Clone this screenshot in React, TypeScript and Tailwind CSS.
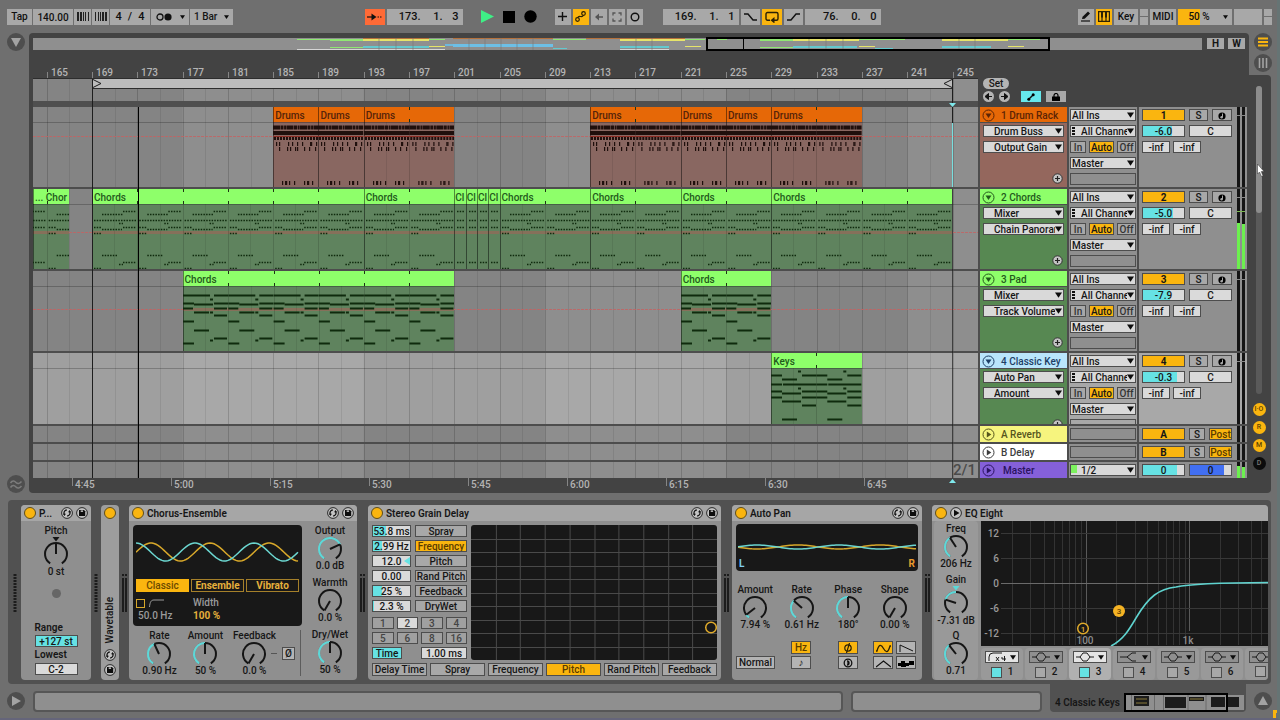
import React from "react";

const BAR = 860.5 / 76;
const barX = (bar: number) => 59 + (bar - 169) * BAR;

/* ---------- data ---------- */

type Seg = [y: number, from: number, to: number];

interface ClipData {
  name: string;
  from: number;
  to: number;
}

interface Track {
  name: string;
  color: string;
  text: string;
  body: string;
  clipHead: string;
  clipText: string;
  clipBody: string;
  kind: "drums" | "chords" | "pad" | "keys";
  device: string;
  param: string;
  volume: string;
  volumeFill: number;
  meter: number;
  automation: number | null;
  selected?: boolean;
  clips: ClipData[];
}

const green = {
  color: "#8eff6a",
  text: "#235a1c",
  body: "#578852",
  clipHead: "#8eff6a",
  clipText: "#235a1c",
  clipBody: "#5f835e",
};

const tracks: Track[] = [
  {
    name: "1 Drum Rack",
    color: "#e66807",
    text: "#5c2405",
    body: "#94675d",
    clipHead: "#e66807",
    clipText: "#55230a",
    clipBody: "#896761",
    kind: "drums",
    device: "Drum Buss",
    param: "Output Gain",
    volume: "-6.0",
    volumeFill: 70,
    meter: 0,
    automation: 29,
    clips: [
      { name: "Drums", from: 185, to: 189 },
      { name: "Drums", from: 189, to: 193 },
      { name: "Drums", from: 193, to: 201 },
      { name: "Drums", from: 213, to: 221 },
      { name: "Drums", from: 221, to: 225 },
      { name: "Drums", from: 225, to: 229 },
      { name: "Drums", from: 229, to: 237 },
    ],
  },
  {
    ...green,
    name: "2 Chords",
    kind: "chords",
    device: "Mixer",
    param: "Chain Panorama",
    volume: "-5.0",
    volumeFill: 73,
    meter: 46,
    automation: 43,
    clips: [
      { name: "... Chor", from: 163.79, to: 167 },
      { name: "Chords", from: 169, to: 193 },
      { name: "Chords", from: 193, to: 201 },
      { name: "Cl", from: 201, to: 202 },
      { name: "Cl", from: 202, to: 203 },
      { name: "Cl", from: 203, to: 204 },
      { name: "Cl", from: 204, to: 205 },
      { name: "Chords", from: 205, to: 213 },
      { name: "Chords", from: 213, to: 221 },
      { name: "Chords", from: 221, to: 229 },
      { name: "Chords", from: 229, to: 245 },
    ],
  },
  {
    ...green,
    name: "3 Pad",
    kind: "pad",
    device: "Mixer",
    param: "Track Volume",
    volume: "-7.9",
    volumeFill: 66,
    meter: 0,
    automation: 38,
    clips: [
      { name: "Chords", from: 177, to: 201 },
      { name: "Chords", from: 221, to: 229 },
    ],
  },
  {
    ...green,
    name: "4 Classic Key",
    color: "#b9e5fb",
    text: "#1d3f66",
    kind: "keys",
    device: "Auto Pan",
    param: "Amount",
    volume: "-0.3",
    volumeFill: 84,
    meter: 0,
    automation: null,
    selected: true,
    clips: [{ name: "Keys", from: 229, to: 237 }],
  },
];

const chordNotes: Seg[] = [
  [7, 31, 44], [10, 10, 31], [16, 2, 44], [19, 27, 31], [23, 2, 10], [23, 31, 44],
  [25, 10, 30], [29, 2, 10], [51, 10, 26], [58, 31, 44], [60, 27, 31], [64, 2, 10],
];
const padNotes: Seg[] = [
  [9, 0, 27], [9, 31, 45], [13, 27, 30], [17, 0, 11], [17, 31, 45], [18, 11, 30],
  [22, 0, 10], [22, 31, 44], [26, 11, 26], [26, 27, 30], [29, 31, 44], [35, 0, 11],
  [44, 11, 26], [52, 31, 44], [54, 27, 30], [57, 0, 11],
];
const keyNotes: Seg[] = [
  [3, 27, 30], [7, 0, 11], [7, 31, 45], [11, 11, 26], [16, 0, 11], [16, 12, 45],
  [20, 27, 30], [23, 0, 11], [23, 31, 45], [25, 11, 30], [29, 0, 11], [29, 31, 45],
  [33, 11, 30], [37, 31, 45], [51, 11, 26],
];
const noteSets = { chords: chordNotes, pad: padNotes, keys: keyNotes };

const drumA = [3, 6, 15, 19, 24, 29, 37, 38, 43];
const drumB = [6, 14, 17, 22, 24, 31, 36, 42];
const drumC = [9, 12, 13, 16, 21, 31, 34, 35, 39];

/* ---------- small parts ---------- */

const chip =
  "flex items-center justify-center overflow-hidden whitespace-nowrap border border-[#4d4d4d] pt-px leading-[10px]";

const Arrow: React.FC<{ className?: string }> = ({ className }) => (
  <svg className={className} width="8" height="6" viewBox="0 0 8 6">
    <path d="M0 0H8L4 6Z" fill="#0c0c0c" />
  </svg>
);

const Chooser: React.FC<{
  label: string;
  value: string;
  className?: string;
  dots?: boolean;
  indent?: boolean;
}> = ({ label, value, className = "", dots, indent }) => (
  <div className={`relative h-3 ${className}`}>
    <select
      aria-label={label}
      className={`block h-3 w-full appearance-none overflow-hidden border border-[#4d4d4d] bg-[#d9d9d9] pr-2 pt-px leading-[10px] ${
        dots || indent ? "pl-2.5" : "pl-px"
      }`}
    >
      <option>{value}</option>
    </select>
    {dots && (
      <svg className="pointer-events-none absolute left-0.5 top-0.5" width="4" height="8">
        <path d="M0 0h3v2H0zM0 3h3v2H0zM0 6h3v2H0z" fill="#111" />
      </svg>
    )}
    <Arrow className="pointer-events-none absolute right-0.5 top-[3px] h-[6px] w-[7px]" />
  </div>
);

const Field: React.FC<{
  label: string;
  value: string;
  fill?: number;
  fillColor?: string;
  className?: string;
}> = ({ label, value, fill = 0, fillColor = "#66e2e4", className = "" }) => (
  <input
    aria-label={label}
    defaultValue={value}
    className={`block h-3 min-w-0 border border-[#4d4d4d] pt-px text-center leading-[10px] ${className}`}
    style={{
      background: `linear-gradient(90deg, ${fillColor} ${fill}%, #dadada ${fill}%)`,
    }}
  />
);

const polar = (cx: number, cy: number, r: number, deg: number) => {
  const a = (deg * Math.PI) / 180;
  return `${(cx + r * Math.sin(a)).toFixed(2)} ${(cy - r * Math.cos(a)).toFixed(2)}`;
};

const arc = (cx: number, cy: number, r: number, from: number, to: number) =>
  `M${polar(cx, cy, r, from)}A${r} ${r} 0 ${to - from > 180 ? 1 : 0} 1 ${polar(cx, cy, r, to)}`;

const Knob: React.FC<{
  label: string;
  value: string;
  angle: number;
  bipolar?: boolean;
}> = ({ label, value, angle, bipolar }) => {
  const h = bipolar ? 30 : 24;
  const cy = bipolar ? 18 : 13;
  const start = bipolar ? Math.min(0, angle) : -148;
  const end = bipolar ? Math.max(0, angle) : angle;
  return (
    <label className="relative flex flex-col items-center whitespace-nowrap leading-[11px]">
      <span>{label}</span>
      <input
        type="range"
        min={-150}
        max={150}
        defaultValue={angle}
        className="sr-only"
      />
      <svg width="26" height={h} viewBox={`0 0 26 ${h}`} fill="none">
        <path d={arc(13, cy, 11, -148, 148)} stroke="#151515" strokeWidth="2" />
        {end > start && (
          <>
            <path d={arc(13, cy, 11, start, end)} stroke="#8f8f8f" strokeWidth="3" />
            <path d={arc(13, cy, 11, start, end)} stroke="#5cd8d8" strokeWidth="2" />
          </>
        )}
        <path
          d={`M13 ${cy}L${polar(13, cy, 11, angle)}`}
          stroke="#151515"
          strokeWidth="2"
        />
        {bipolar && (
          <path d="M9.500 1h7l-3.500 4.500z" fill={angle === 0 ? "#151515" : "#5cd8d8"} />
        )}
      </svg>
      <span>{value}</span>
    </label>
  );
};

const wave = (
  width: number,
  mid: number,
  amp: number,
  period: number,
  peak: number,
) => {
  let d = "";
  for (let x = 0; x <= width; x += 2) {
    const y = mid - amp * Math.cos(((x - peak) / period) * 2 * Math.PI);
    d += `${x === 0 ? "M" : "L"}${x} ${y.toFixed(2)}`;
  }
  return d;
};

const HotSwap = () => (
  <button aria-label="Hot-swap preset" className="shrink-0">
    <svg width="12" height="12" viewBox="0 0 12 12" fill="none">
      <circle cx="6" cy="6" r="5.400" fill="#c3c3c3" stroke="#2a2a2a" />
      <path d="M3.300 7.400A3 3 0 0 1 5.800 3M8.700 4.600A3 3 0 0 1 6.200 9" stroke="#111" strokeWidth="1.300" />
      <path d="M1.900 6.800h3L3.500 8.900zM10.100 5.200h-3l1.400-2.100z" fill="#111" />
    </svg>
  </button>
);

const SaveIcon = () => (
  <button aria-label="Save preset" className="shrink-0">
    <svg width="12" height="12" viewBox="0 0 12 12">
      <circle cx="6" cy="6" r="5.400" fill="#c3c3c3" stroke="#2a2a2a" />
      <path d="M3 3h5l1.200 1.200V9H3z" fill="#0d0d0d" />
      <path d="M4.700 3.400h2.400v1.500H4.700z" fill="#c3c3c3" />
    </svg>
  </button>
);

const PowerDot = () => (
  <button
    aria-label="Device activator"
    className="size-3 shrink-0 rounded-full border border-[#5d4c1b] bg-[#fab50f]"
  />
);

const Device: React.FC<{
  title: string;
  className?: string;
  plain?: boolean;
  children: React.ReactNode;
}> = ({ title, className = "", plain, children }) => (
  <section className={`flex flex-col overflow-hidden rounded bg-[#8f8f8f] ${className}`}>
    <header className="flex h-4 shrink-0 items-center gap-[3px] bg-[#a6a6a6] px-[3px]">
      <PowerDot />
      {plain && (
        <button aria-label="Show spectrum" className="shrink-0">
          <svg width="12" height="12" viewBox="0 0 12 12">
            <circle cx="6" cy="6" r="5.400" fill="#c3c3c3" stroke="#2a2a2a" />
            <path d="M4 2.800v6.400L9.500 6z" fill="#0d0d0d" />
          </svg>
        </button>
      )}
      <h2 className="flex-1 whitespace-nowrap font-semibold">{title}</h2>
      {!plain && (
        <>
          <HotSwap />
          <SaveIcon />
        </>
      )}
    </header>
    {children}
  </section>
);

const RackDots: React.FC<{ className: string }> = ({ className }) => (
  <div className={`flex shrink-0 items-center justify-center ${className}`}>
    <svg width="4" height="38">
      <path d="M2 0V38" stroke="#1c1c1c" strokeWidth="3" strokeDasharray="2 1" />
    </svg>
  </div>
);

const LevelPair: React.FC<{ className: string }> = ({ className }) => (
  <div className={`flex shrink-0 items-center justify-center ${className}`}>
    <svg width="5" height="38">
      <path d="M0 0h2v2H0zM3 0h2v2H3zM0 4h2v34H0zM3 4h2v34H3z" fill="#1c1c1c" />
    </svg>
  </div>
);

/* ---------- control bar ---------- */

const barItem =
  "flex h-4 shrink-0 items-center justify-center whitespace-nowrap bg-[#a8a8a8] text-[#101010]";

const Position: React.FC<{ label: string; parts: [string, string, string] }> = ({
  label,
  parts,
}) => (
  <div className={`${barItem} w-[76px] pt-px`} role="group" aria-label={label}>
    <input aria-label={`${label} bars`} defaultValue={parts[0]} className="w-[34px] text-right" />
    <input aria-label={`${label} beats`} defaultValue={parts[1]} className="w-[22px] text-right" />
    <input aria-label={`${label} sixteenths`} defaultValue={parts[2]} className="mr-1 w-4 text-right" />
  </div>
);

const MiniPair = () => (
  <div className="flex h-4 w-2 shrink-0 flex-col gap-px">
    <div className="flex-1 bg-[#a8a8a8]" />
    <div className="flex-1 bg-[#a8a8a8]" />
  </div>
);

const ControlBar = () => (
  <header className="flex h-[33px] items-center pl-[7px] pr-[5px] text-[11px]">
    <div className="flex items-center gap-px">
      <button className={`${barItem} w-[25px] text-[10px]`}>Tap</button>
      <input aria-label="Tempo" defaultValue="140.00" className={`${barItem} w-10 pt-px text-center text-[10px]`} />
      <button aria-label="Nudge down" className={`${barItem} w-[17px]`}>
        <svg width="12" height="9">
          <path d="M0 0h2v9H0zM3 0h2v9H3zM6 0h1v9H6zM8 0h1v9H8zM11 0h1v9h-1z" fill="#222" />
        </svg>
      </button>
      <button aria-label="Nudge up" className={`${barItem} w-[17px]`}>
        <svg width="12" height="9">
          <path d="M0 0h1v9H0zM3 0h1v9H3zM5 0h1v9H5zM7 0h2v9H7zM10 0h2v9h-2z" fill="#222" />
        </svg>
      </button>
      <button className={`${barItem} w-10 gap-[6px] pt-px`}>
        <span>4</span>
        <span>/</span>
        <span>4</span>
      </button>
      <button aria-label="Metronome" className={`${barItem} w-[38px] gap-2`}>
        <svg width="16" height="8" viewBox="0 0 16 8">
          <circle cx="4" cy="4" r="3" fill="none" stroke="#111" strokeWidth="1.300" />
          <circle cx="12" cy="4" r="3.600" fill="#111" />
        </svg>
        <Arrow className="h-1 w-[5px]" />
      </button>
      <div className="relative h-4 w-[43px]">
        <select
          aria-label="Quantization"
          className="block h-4 w-full appearance-none bg-[#a8a8a8] pl-1 text-[10px]"
        >
          <option>1 Bar</option>
        </select>
        <Arrow className="pointer-events-none absolute right-1 top-1.5 h-1 w-[5px]" />
      </div>
    </div>

    <div className="grow-2" />

    <div className="flex items-center">
      <button aria-label="Follow" className={`${barItem} mr-0.5 w-5 bg-[#ff6a36]!`}>
        <svg width="15" height="8" viewBox="0 0 15 8">
          <path d="M0 4h6" stroke="#111" strokeWidth="1.200" />
          <path d="M4.500 0.500v7L9.500 4z" fill="#111" />
          <path d="M10.500 4h1.500M13 4h1.500" stroke="#111" strokeWidth="1.200" />
        </svg>
      </button>
      <Position label="Position" parts={["173.", "1.", "3"]} />
      <div className="ml-[18px] mr-[18px] flex items-center gap-[9px]">
        <button aria-label="Play">
          <svg width="13" height="13">
            <path d="M0 0v13L13 6.500z" fill="#3fef86" />
          </svg>
        </button>
        <button aria-label="Stop">
          <svg width="12" height="12">
            <path d="M0 0h12v12H0z" />
          </svg>
        </button>
        <button aria-label="Record">
          <svg width="13" height="13">
            <circle cx="6.500" cy="6.500" r="6.200" />
          </svg>
        </button>
      </div>
      <div className="flex gap-0.5">
        <button aria-label="Overdub" className={`${barItem} w-4`}>
          <svg width="9" height="9">
            <path d="M4.500 0v9M0 4.500h9" stroke="#111" strokeWidth="1.400" />
          </svg>
        </button>
        <button aria-label="Automation arm" className={`${barItem} w-4 bg-[#fab50f]!`}>
          <svg width="11" height="11" viewBox="0 0 11 11" fill="none" stroke="#2b2105" strokeWidth="1.200">
            <circle cx="2.500" cy="8.500" r="1.800" />
            <circle cx="8.500" cy="2.500" r="1.800" />
            <path d="M2.800 6.700C3.500 3.500 7.500 7.500 8.200 4.300" />
          </svg>
        </button>
        <button aria-label="Re-enable automation" className={`${barItem} w-4`}>
          <svg width="8" height="8">
            <path d="M0 4l4-3.500v7z" fill="#555" />
            <path d="M3 4h5" stroke="#555" strokeWidth="1.500" />
          </svg>
        </button>
        <button aria-label="Capture MIDI" className={`${barItem} w-4`}>
          <svg width="10" height="10" fill="none" stroke="#555" strokeWidth="1.300">
            <path d="M1 3.500V1h2.500M6.500 1H9v2.500M9 6.500V9H6.500M3.500 9H1V6.500" />
          </svg>
        </button>
        <button aria-label="Session record" className={`${barItem} w-4`}>
          <svg width="10" height="10">
            <circle cx="5" cy="5" r="3.800" fill="none" stroke="#111" strokeWidth="1.400" />
          </svg>
        </button>
      </div>
      <div className="ml-5 flex gap-0.5">
        <Position label="Loop start" parts={["169.", "1.", "1"]} />
        <button aria-label="Punch in" className={`${barItem} w-[19px]`}>
          <svg width="13" height="8">
            <path d="M0 1h4l5 6h4" fill="none" stroke="#111" strokeWidth="1.400" />
          </svg>
        </button>
        <button aria-label="Loop" className={`${barItem} w-5 bg-[#fab50f]!`}>
          <svg width="14" height="12" viewBox="0 0 14 12">
            <path d="M5 9.300H2.500a1.500 1.500 0 0 1-1.500-1.500V3a1.500 1.500 0 0 1 1.500-1.500h9A1.500 1.500 0 0 1 13 3v4.800a1.500 1.500 0 0 1-1.500 1.500H9" fill="none" stroke="#2b2105" strokeWidth="1.400" />
            <path d="M5.500 9.300L9.500 6v6.500z" fill="#2b2105" />
          </svg>
        </button>
        <button aria-label="Punch out" className={`${barItem} w-[19px]`}>
          <svg width="13" height="8">
            <path d="M0 7h4l5-6h4" fill="none" stroke="#111" strokeWidth="1.400" />
          </svg>
        </button>
        <Position label="Loop length" parts={["76.", "0.", "0"]} />
      </div>
    </div>

    <div className="grow-3" />

    <div className="flex gap-0.5">
      <button aria-label="Draw mode" className={`${barItem} w-4`}>
        <svg width="12" height="11" viewBox="0 0 12 11">
          <path d="M2 8l.6-2.300L8 .5l2 2-5.300 5.200z" fill="#111" />
          <path d="M1 10h9" stroke="#111" strokeWidth="1.200" />
        </svg>
      </button>
      <button aria-label="Computer MIDI keyboard" className={`${barItem} w-4 bg-[#fab50f]!`}>
        <svg width="12" height="11" viewBox="0 0 12 11">
          <path d="M.6.600h10.800v9.800H.6zM4 6v4.500M8 6v4.500" fill="none" stroke="#2b2105" strokeWidth="1.200" />
          <path d="M3 0h2v6.500H3zM7 0h2v6.500H7z" fill="#2b2105" />
        </svg>
      </button>
      <button className={`${barItem} w-6 text-[10px]`}>Key</button>
      <MiniPair />
      <button className={`${barItem} w-[26px] text-[10px]`}>MIDI</button>
      <button
        aria-label="CPU load"
        className={`${barItem} relative w-[54px] bg-[linear-gradient(90deg,#fab50f_22px,#a8a8a8_22px)]! pr-3 text-[10px]`}
      >
        50 %
        <Arrow className="absolute right-1 top-1.5 h-1 w-[5px]" />
      </button>
      <div className={`${barItem} w-7`} />
      <MiniPair />
    </div>
  </header>
);

/* ---------- arrangement ---------- */

const Y = "#e6e46a";
const G = "#8fe873";
const C = "#62c9cf";
const O = "#b5713c";
const W = "#d6d6d6";
const overviewSegs: [string, number, number, number, number][] = [
  [G, 264, 298, 1, 1], [G, 297, 330, 1, 2], [O, 330, 396, 0, 1], [Y, 330, 396, 1, 2],
  [G, 396, 412, 1, 1], [W, 264, 412, 11, 1], [G, 297, 330, 9, 1], [C, 330, 396, 8, 2],
  [Y, 396, 412, 8, 1], ["#6db9dd", 412, 420, 6, 2], ["#6dbfe6", 420, 520, 6, 3],
  [O, 420, 520, 0, 1], [G, 520, 553, 1, 1], [C, 520, 534, 10, 1], [O, 553, 587, 0, 1],
  [Y, 587, 652, 1, 2], [O, 587, 652, 0, 1], [C, 587, 636, 8, 2], [W, 587, 636, 11, 1],
  [G, 652, 672, 1, 1], [Y, 652, 668, 8, 1], [G, 684, 694, 1, 1], [G, 727, 760, 1, 2],
  [G, 727, 760, 9, 1], [O, 760, 826, 0, 1], [Y, 760, 826, 1, 2], [C, 760, 824, 8, 2],
  [W, 695, 842, 11, 1], [G, 826, 872, 1, 1], [Y, 826, 842, 8, 1], [C, 842, 860, 10, 1],
  [O, 875, 909, 0, 1], [Y, 909, 975, 1, 2], [C, 909, 958, 8, 2], [W, 909, 995, 11, 1],
  [G, 975, 1007, 1, 1], [Y, 975, 991, 8, 1],
];

const Overview = () => (
  <div className="mr-0.5 flex h-3 gap-[5px]">
    <div className="relative h-3 flex-1 bg-[#8f8f8f]">
      <svg className="absolute inset-x-0 -top-1 h-5 w-full overflow-visible">
        {overviewSegs.map(([fill, from, to, y, h], i) => (
          <rect key={i} x={from} y={y + 4} width={to - from} height={h} fill={fill} />
        ))}
        {[346, 363, 380, 436, 452, 468, 484, 500, 603, 619, 776, 793, 810, 926, 942].map((x) => (
          <path key={x} d={`M${x} 4v12`} stroke="#777" strokeWidth=".6" />
        ))}
        <path d="M710.500 4v12" stroke="#000" />
        <path d="M674 4h342v12H674z" fill="none" stroke="#000" strokeWidth="2" />
      </svg>
    </div>
    <button className="h-[11px] w-[17px] bg-[#a8a8a8] font-bold leading-[11px]">H</button>
    <button className="-ml-px h-[11px] w-[17px] bg-[#a8a8a8] font-bold leading-[11px]">W</button>
  </div>
);

const Stripes: React.FC<{ light?: boolean }> = ({ light }) => (
  <svg className="absolute inset-0 h-full w-full">
    <rect width="100%" height="100%" fill={light ? "#9f9f9f" : "#848484"} />
    {[177, 209, 241].map((bar) => (
      <rect
        key={bar}
        x={barX(bar)}
        width={16 * BAR}
        height="100%"
        fill={light ? "#a8a8a8" : "#8e8e8e"}
      />
    ))}
    {Array.from({ length: 41 }, (_, i) => (
      <rect
        key={i}
        x={Math.round(barX(165 + i * 2))}
        width="1"
        height="100%"
        fill="#000"
        opacity={i % 2 ? 0.08 : 0.16}
      />
    ))}
  </svg>
);

const Ruler = () => (
  <div className="flex h-[57px] gap-0.5">
    <div className="flex min-w-0 flex-1 flex-col">
      <div className="relative h-7 text-[#b4b4b4]">
        {Array.from({ length: 21 }, (_, i) => 165 + i * 4).map((bar) => (
          <span
            key={bar}
            className="absolute top-[18px] pl-1 leading-[10px] before:absolute before:left-0 before:top-1 before:h-1.5 before:w-px before:bg-[#858585]"
            style={{ left: Math.round(barX(bar)) }}
          >
            {bar}
          </span>
        ))}
      </div>
      <div className="relative h-[23px] overflow-hidden">
        <Stripes />
        <svg className="absolute inset-0 h-full w-full">
          <path d="M0 .5h946" stroke="#2d2d2d" />
          <path d="M59.500 .5h860v10h-860z" fill="#bcbcbc" stroke="#2d2d2d" />
          <path d="M60 1.500l8 4-8 4M919 1.500l-8 4 8 4" fill="none" stroke="#1b1b1b" />
        </svg>
      </div>
      <div className="h-1.5 bg-[#4f4f4f]" />
    </div>
    <div className="flex w-[267px] flex-col gap-0.5 pl-[3px] pt-7">
      <button className="h-[11px] w-[26px] rounded-full bg-[#b4b4b4] leading-[11px]">Set</button>
      <div className="flex items-center">
        <button aria-label="Previous locator">
          <svg width="11" height="11">
            <circle cx="5.500" cy="5.500" r="5.500" fill="#b4b4b4" />
            <path d="M2 5.500L5.500 2.500v6zM4.500 5.500H9" stroke="#111" fill="#111" />
          </svg>
        </button>
        <button aria-label="Next locator" className="ml-[5px]">
          <svg width="11" height="11">
            <circle cx="5.500" cy="5.500" r="5.500" fill="#b4b4b4" />
            <path d="M9 5.500L5.500 2.500v6zM6.500 5.500H2" stroke="#111" fill="#111" />
          </svg>
        </button>
        <button
          aria-label="Automation mode"
          className="ml-[11px] flex h-[11px] w-5 items-center justify-center bg-[#66e8ec]"
        >
          <svg width="8" height="8">
            <path d="M1.500 6.500L6.500 1.500" stroke="#111" strokeWidth="1.400" />
            <circle cx="1.800" cy="6.200" r="1.500" />
            <circle cx="6.200" cy="1.800" r="1.500" />
          </svg>
        </button>
        <button
          aria-label="Lock envelopes"
          className="ml-[5px] flex h-[11px] w-5 items-center justify-center bg-[#a8a8a8]"
        >
          <svg width="8" height="8">
            <path d="M0 3.500h8V8H0z" />
            <path d="M2 4V2.500a2 2 0 0 1 4 0V4" fill="none" stroke="#000" strokeWidth="1.200" />
          </svg>
        </button>
      </div>
    </div>
  </div>
);

const Notes: React.FC<{ kind: Track["kind"]; from: number; to: number }> = ({ kind, from, to }) => {
  const four = BAR * 4;
  // phrases repeat every four bars, counted from bar 169
  const first = Math.floor((from - 169) / 4);
  const last = Math.ceil((to - 169) / 4);
  if (kind === "chords" && to - from === 1) {
    return (
      <svg className="absolute inset-x-0 bottom-0 top-[15px] h-[65px] w-full">
        <path
          d="M3 7.500h7M3 16.500h7M3 23.500h7M3 58.500h7"
          stroke="#0f2a0d"
          strokeWidth="1.400"
          strokeDasharray="1.500 1.200"
        />
      </svg>
    );
  }
  return (
    <svg className="absolute inset-x-0 bottom-0 top-[15px] h-[65px] w-full">
      {Array.from({ length: last - first }, (_, i) => {
        const x0 = (169 + (first + i) * 4 - from) * BAR;
        if (kind === "drums") {
          return (
            <g key={i} fill="#1f0f0c" transform={`translate(${x0.toFixed(1)} 0)`}>
              <path d={`M0 5.500H${four}`} stroke="#1f0f0c" strokeWidth="4" strokeDasharray="7 .5 3 .6 2 .4" />
              <rect y="9" width={four} height="4" />
              <path d={`M0 14.500H${four}`} stroke="#8c2a22" />
              <path d={`M1 16.500H${four}`} stroke="#1f0f0c" strokeWidth="3" strokeDasharray="2 1" />
              {drumA.map((x) => <rect key={x} x={x} y="20" width="1.200" height="4" />)}
              {drumB.map((x) => <rect key={x} x={x} y="25" width="1.200" height="4" />)}
              {drumC.map((x) => <rect key={x} x={x} y="59" width="1.200" height="4" />)}
            </g>
          );
        }
        const dotted = kind === "chords";
        return (
          <g key={i} transform={`translate(${x0.toFixed(1)} 0)`}>
            {noteSets[kind].map(([y, a, b], n) => (
              <path
                key={n}
                d={`M${a} ${y + 0.5}H${b}`}
                stroke="#0f2a0d"
                strokeWidth={dotted ? 1.4 : 2}
                strokeDasharray={dotted ? "1.5 1.2" : undefined}
              />
            ))}
          </g>
        );
      })}
    </svg>
  );
};

const Clip: React.FC<{ clip: ClipData; track: Track }> = ({ clip, track }) => {
  const ticks = [];
  for (let b = 165; b < clip.to; b += 4) if (b > clip.from) ticks.push(b);
  return (
    <div
      className="absolute inset-y-0 overflow-hidden"
      style={{
        left: barX(clip.from),
        width: (clip.to - clip.from) * BAR,
        background: track.clipBody,
      }}
    >
      <div
        className={`h-[15px] whitespace-nowrap leading-[17px] ${
          clip.to - clip.from === 1 ? "pl-px" : "pl-0.5"
        }`}
        style={{ background: track.clipHead, color: track.clipText }}
      >
        {clip.name}
      </div>
      <svg className="absolute inset-0 h-full w-full">
        {track.automation !== null && track.kind !== "drums" && (
          <rect y={track.automation - 1} width="100%" height="3" fill="#86705a" />
        )}
        {ticks.map((b) => {
          const x = Math.round((b - clip.from) * BAR);
          return (
            <React.Fragment key={b}>
              <path d={`M${x + 0.5} 0v3M${x + 0.5} 12v3`} stroke="#1d3315" />
              <path d={`M${x + 0.5} 15v70`} stroke="#000" opacity=".14" />
              <path d={`M${x - 22.500} 15v70`} stroke="#000" opacity=".08" />
            </React.Fragment>
          );
        })}
        <path d="M.5 0v85" stroke="#000" opacity=".45" />
        <path d="M0 15.500h2000" stroke="#000" opacity=".25" />
      </svg>
      <Notes kind={track.kind} from={clip.from} to={clip.to} />
    </div>
  );
};

const FoldButton: React.FC<{ label: string; color: string; open?: boolean }> = ({
  label,
  color,
  open,
}) => (
  <button aria-label={label} className="shrink-0" style={{ color }}>
    <svg width="13" height="13" viewBox="0 0 13 13" fill="none">
      <circle cx="6.500" cy="6.500" r="5.500" stroke="currentColor" />
      <path d={open ? "M3.500 4.500h6l-3 4.500z" : "M4.800 3.500v6l4.500-3z"} fill="currentColor" />
    </svg>
  </button>
);

const Meter: React.FC<{ level: number; tick?: boolean }> = ({ level, tick }) => (
  <div className="relative flex h-full w-2 shrink-0 gap-0.5">
    {[0, 1].map((n) => (
      <div key={n} className="flex flex-1 flex-col justify-end bg-[#141414]">
        <div className="bg-[#6cf04f]" style={{ height: level - n }} />
      </div>
    ))}
    {tick && <div className="absolute inset-x-0 top-2 h-px bg-[#8a8a8a]" />}
    {level > 20 && <div className="absolute inset-x-0 top-[22px] h-px bg-[#7ab84f]" />}
  </div>
);

const TrackRow: React.FC<{ track: Track; index: number }> = ({ track, index }) => {
  const panel = track.selected ? "bg-[#a8a8a8]" : "bg-[#8f8f8f]";
  return (
    <div className={`flex gap-0.5 ${track.selected ? "h-[71px]" : "h-20"}`}>
      <div className="relative min-w-0 flex-1 overflow-hidden">
        <Stripes light={track.selected} />
        <svg className="absolute inset-0 h-full w-full">
          <path d="M0 15.500h2000" stroke="#000" opacity=".22" />
          {track.automation !== null && (
            <path
              d={`M0 ${track.automation + 0.5}h2000`}
              stroke="#c26464"
              strokeDasharray="3 1"
              opacity=".85"
            />
          )}
        </svg>
        {track.clips.map((clip) => (
          <Clip key={clip.from} clip={clip} track={track} />
        ))}
      </div>

      <div className="flex w-[87px] flex-col overflow-hidden" style={{ background: track.body }}>
        <div
          className="flex h-4 shrink-0 items-center gap-1.5 whitespace-nowrap border-b border-[#4d4d4d] pl-0.5 pt-px"
          style={{ background: track.color, color: track.text }}
        >
          <FoldButton label={`Fold ${track.name}`} color={track.text} open />
          <span>{track.name}</span>
        </div>
        <div className="flex flex-col gap-1 px-[3px] pt-0.5">
          <Chooser label="Device" value={track.device} indent />
          <Chooser label="Parameter" value={track.param} indent />
        </div>
        <button aria-label="Add automation lane" className="ml-auto mr-1 mt-5 shrink-0">
          <svg width="11" height="11">
            <circle cx="5.500" cy="5.500" r="4.700" fill="#c4c4c4" stroke="#333" />
            <path d="M5.500 3v5M3 5.500h5" stroke="#222" strokeWidth="1.200" />
          </svg>
        </button>
      </div>

      <div className={`flex w-[68px] flex-col gap-1 overflow-hidden px-px pt-0.5 ${panel}`}>
        <Chooser label="Input type" value="All Ins" className="shrink-0" />
        <Chooser label="Input channel" value="All Channels" dots className="shrink-0" />
        <div className="flex shrink-0 justify-between">
          <button className={`${chip} h-3 w-4 bg-[#a8a8a8] text-[#333]`}>In</button>
          <button className={`${chip} h-3 w-[25px] bg-[#fab50f]`}>Auto</button>
          <button className={`${chip} h-3 w-[19px] bg-[#a8a8a8] text-[#333]`}>Off</button>
        </div>
        <Chooser label="Output type" value="Master" className="shrink-0" />
        <div className="h-3 shrink-0 border border-[#4d4d4d]" />
      </div>

      <div className={`flex w-[108px] justify-between pl-[3px] pr-0.5 ${panel}`}>
        <div className="flex w-[90px] flex-col gap-1 pt-0.5">
          <div className="flex gap-1">
            <button className={`${chip} h-3 w-[43px] bg-[#fab50f] font-bold`}>{index + 1}</button>
            <button className={`${chip} h-3 w-[19px] bg-[#a8a8a8]`}>S</button>
            <button aria-label="Arm" className={`${chip} h-3 w-5 bg-[#a8a8a8]`}>
              <svg width="8" height="8">
                <circle cx="4" cy="4" r="3.600" />
                <path d="M4.500 1.500v3.500" fill="none" stroke="#a8a8a8" strokeWidth="1" />
                <circle cx="3.600" cy="5.200" r="1.200" fill="#a8a8a8" />
              </svg>
            </button>
          </div>
          <div className="flex gap-1">
            <Field label="Volume" value={track.volume} fill={track.volumeFill} className="w-[43px]" />
            <Field label="Pan" value="C" className="w-[43px]" />
          </div>
          <div className="flex gap-[3px]">
            <Field label="Send A" value="-inf" className="w-7" />
            <Field label="Send B" value="-inf" className="w-7" />
          </div>
        </div>
        <Meter level={track.meter} tick />
      </div>
    </div>
  );
};

const ReturnRow: React.FC<{ name: string; letter?: string; color: string; text: string }> = ({
  name,
  letter,
  color,
  text,
}) => (
  <div className="flex h-4 gap-0.5">
    <div className="relative min-w-0 flex-1 overflow-hidden">
      <Stripes />
    </div>
    <div
      className="flex w-[87px] items-center gap-1.5 whitespace-nowrap pl-0.5"
      style={{ background: color, color: text }}
    >
      <FoldButton label={`Unfold ${name}`} color={text} />
      <span className={letter ? "" : "pl-0.5"}>{name}</span>
    </div>
    <div className="w-[68px] bg-[#8f8f8f] px-px pt-0.5">
      {letter ? (
        <div className="h-3 border border-[#4d4d4d]" />
      ) : (
        <div className="relative">
          <Chooser label="Master output" value="1/2" indent />
          <div className="absolute left-px top-px h-2 w-[6px] bg-[#7df25f]" />
        </div>
      )}
    </div>
    <div className="flex w-[108px] justify-between bg-[#8f8f8f] pl-[3px] pr-0.5">
      <div className="flex w-[90px] gap-1 pt-0.5">
        {letter ? (
          <>
            <button className={`${chip} h-3 w-[43px] bg-[#fab50f] font-bold`}>{letter}</button>
            <button className={`${chip} h-3 w-4 bg-[#a8a8a8]`}>S</button>
            <button className={`${chip} h-3 w-[23px] bg-[#fab50f] text-[#5a3c00]`}>Post</button>
          </>
        ) : (
          <>
            <Field label="Master volume" value="0" fill={84} className="w-[43px]" />
            <Field label="Cue volume" value="0" fill={84} fillColor="#416ff2" className="w-[43px]" />
          </>
        )}
      </div>
      <Meter level={letter ? 0 : 12} />
    </div>
  </div>
);

const times = ["4:45", "5:00", "5:15", "5:30", "5:45", "6:00", "6:15", "6:30", "6:45"];

const TimeRuler = () => (
  <div className="relative h-[15px] text-[#b4b4b4]">
    {times.map((t, i) => (
      <span
        key={t}
        className="absolute top-0 pl-[3px] leading-[14px] before:absolute before:left-0 before:top-0 before:h-2 before:w-px before:bg-[#858585]"
        style={{ left: 39 + i * 99 }}
      >
        {t}
      </span>
    ))}
  </div>
);

const RoundButton: React.FC<{ label: string; children: React.ReactNode }> = ({
  label,
  children,
}) => (
  <button aria-label={label} className="size-[18px] shrink-0">
    <svg width="18" height="18" viewBox="0 0 18 18">
      <circle cx="9" cy="9" r="9" fill="#4e4e4e" />
      {children}
    </svg>
  </button>
);

const Arrangement = () => (
  <main className="flex">
    <div className="flex w-[29px] shrink-0 flex-col justify-between pb-0 pl-[7px]">
      <RoundButton label="Show browser">
        <path d="M4 5h10L9 14z" fill="#a3a3a3" />
      </RoundButton>
      <RoundButton label="Groove pool">
        <path
          d="M3.500 8c2-3 4-2 5.500-.5s3.500 1.500 5.500-1M3.500 12.500c2-3 4-2 5.500-.5s3.500 1.500 5.500-1"
          fill="none"
          stroke="#7c7c7c"
          strokeWidth="1.600"
        />
      </RoundButton>
    </div>

    <div className="min-w-0 flex-1 rounded-l rounded-tr bg-[#434343] pl-1 pr-0.5 pt-[5px]">
      <Overview />
      <div className="relative">
        <Ruler />
        <div className="flex flex-col gap-0.5 bg-[#4d4d4d]">
          {tracks.map((track, i) => (
            <TrackRow key={track.name} track={track} index={i} />
          ))}
          <ReturnRow name="A Reverb" letter="A" color="#f6f47e" text="#56551c" />
          <ReturnRow name="B Delay" letter="B" color="#ffffff" text="#3d3d3d" />
          <ReturnRow name="Master" color="#8560d9" text="#2a1260" />
        </div>
        <TimeRuler />
        {/* loop edges, playhead and insert marker run across every lane */}
        <svg className="pointer-events-none absolute left-0 top-0 h-full w-[945px]">
          <path d="M59.500 29v399" stroke="#1e1e1e" />
          <path d="M105.500 57v371" stroke="#000" />
          <path d="M919.500 29v44" stroke="#1e1e1e" />
          <path d="M919.500 73v64" stroke="#79dede" />
          <path d="M919.500 139v289" stroke="#1e1e1e" opacity=".7" />
          <path d="M916 53h7l-3.500 4zM916 433h7l-3.500-4z" fill="#7fe9ec" />
        </svg>
        <span className="absolute bottom-[15px] right-[271px] text-[15px] leading-4 text-[#4a4a4a]">
          2/1
        </span>
      </div>
    </div>

    <aside className="flex w-[28px] shrink-0 flex-col">
      <div className="flex h-[42px] flex-col items-end gap-[3px] pr-[5px]">
        <RoundButton label="Arrangement view">
          <path d="M4 5.500h10M4 9h10M4 12.500h10" stroke="#fab50f" strokeWidth="2" />
        </RoundButton>
        <RoundButton label="Session view">
          <path d="M5.500 4v10M9 4v10M12.500 4v10" stroke="#a3a3a3" strokeWidth="1.600" />
        </RoundButton>
      </div>
      <div className="relative mr-1.5 flex flex-1 flex-col items-center rounded-br rounded-tr bg-[#434343] pr-0.5 pt-[11px]">
        <div className="h-[308px] w-1.5 rounded-full bg-[#5a5a5a]">
          <div className="h-[127px] rounded-full bg-[#8c8c8c]" />
        </div>
        <div className="mt-[9px] flex flex-col gap-[5px]">
          {["I·O", "R", "M", "D"].map((t) => (
            <button
              key={t}
              className={`size-[13px] rounded-full text-[7px] leading-[13px] ${
                t === "D" ? "bg-[#0c0c0c] text-[#777]" : "bg-[#fab50f] text-[#5e4300]"
              }`}
            >
              {t}
            </button>
          ))}
        </div>
        <svg className="pointer-events-none absolute left-2 top-[89px]" width="8" height="13">
          <path d="M.5 0v10l2-2 2 4.500 1.500-.700-1.800-4.300H7z" fill="#fff" stroke="#333" strokeWidth=".5" />
        </svg>
      </div>
    </aside>
  </main>
);

/* ---------- devices ---------- */

const PitchDevice = () => (
  <Device title="P..." className="w-[70px] shrink-0">
    <div className="flex flex-1 flex-col items-center pt-1">
      <Knob label="Pitch" value="0 st" angle={0} bipolar />
      <div className="mt-3 size-[9px] rounded-full bg-[#666]" />
      <div className="mb-[5px] mt-auto flex w-[43px] flex-col">
        <label className="font-semibold leading-[15px]" htmlFor="range">
          Range
        </label>
        <input
          id="range"
          defaultValue="+127 st"
          className="h-3 w-full border border-[#4d4d4d] bg-[#66e2e4] pt-px text-center leading-[10px]"
        />
        <label className="font-semibold leading-4" htmlFor="lowest">
          Lowest
        </label>
        <input
          id="lowest"
          defaultValue="C-2"
          className="h-3 w-full border border-[#4d4d4d] bg-[#dadada] pt-px text-center leading-[10px]"
        />
      </div>
    </div>
  </Device>
);

const WavetableDevice = () => (
  <section className="flex w-[18px] shrink-0 flex-col items-center rounded bg-[#9d9d9d] pb-1 pt-0.5">
    <PowerDot />
    <h2 className="mb-1.5 mt-auto rotate-180 whitespace-nowrap leading-3 [writing-mode:vertical-rl]">
      Wavetable
    </h2>
    <div className="flex flex-col gap-[3px]">
      <HotSwap />
      <SaveIcon />
    </div>
  </section>
);

const ChorusDevice = () => (
  <Device title="Chorus-Ensemble" className="w-[228px] shrink-0">
    <div className="flex flex-1 pl-1">
      <div className="flex w-[169px] flex-col pt-1">
        <div className="flex h-[101px] flex-col rounded bg-[#181818] px-[3px]">
          <svg className="mt-3" width="163" height="30" fill="none" strokeWidth="1.500">
            <path d={wave(162, 15, 9, 59, 15)} stroke="#d8a82a" />
            <path d={wave(162, 15, 9, 59, 0)} stroke="#6bd6d0" />
          </svg>
          <div className="mt-3 grid grid-cols-3 gap-0.5">
            {["Classic", "Ensemble", "Vibrato"].map((m, i) => (
              <button
                key={m}
                className={`h-[13px] border leading-[12px] ${
                  i === 0
                    ? "border-[#fab50f] bg-[#fab50f] text-[#6b4a00]"
                    : "border-[#a5802a] font-bold text-[#e6b03c]"
                }`}
              >
                {m}
              </button>
            ))}
          </div>
          <div className="mt-[5px] flex leading-3 text-[#9b9b9b]">
            <div className="flex w-11 flex-col gap-px">
              <div className="flex h-3 items-center gap-1">
                <input
                  type="checkbox"
                  aria-label="High-pass filter"
                  className="size-[9px] appearance-none border border-[#d8a82a]"
                />
                <svg width="15" height="8">
                  <path d="M.5 8C1 3 2 1 5 1h10" fill="none" stroke="#9b9b9b" />
                </svg>
              </div>
              <span className="whitespace-nowrap pl-0.5">50.0 Hz</span>
            </div>
            <div className="ml-[13px] flex flex-col gap-px">
              <span>Width</span>
              <span className="font-bold text-[#e6b03c]">100 %</span>
            </div>
          </div>
        </div>
        <div className="flex pt-1">
          <div className="flex w-[53px] flex-col items-center">
            <Knob label="Rate" value="0.90 Hz" angle={-25} />
          </div>
          <div className="flex w-[39px] flex-col items-center">
            <Knob label="Amount" value="50 %" angle={0} />
          </div>
          <div className="flex w-[59px] flex-col items-center">
            <Knob label="Feedback" value="0.0 %" angle={-150} />
          </div>
        </div>
      </div>
      <div className="-ml-[31px] mb-1 flex h-[46px] items-center gap-[5px] self-end">
        <div className="h-px w-[6px] bg-[#555]" />
        <button className={`${chip} size-[13px] bg-[#b4b4b4]`}>Ø</button>
        <div className="h-full w-px bg-[#5c5c5c]" />
      </div>
      <div className="flex flex-1 flex-col gap-[6px] pl-0.5 pt-1">
        <Knob label="Output" value="0.0 dB" angle={65} />
        <Knob label="Warmth" value="0.0 %" angle={-150} />
        <Knob label="Dry/Wet" value="50 %" angle={0} />
      </div>
    </div>
  </Device>
);

const grainRows: [string, number, string][] = [
  ["53.8 ms", 35, "Spray"],
  ["2.99 Hz", 24, "Frequency"],
  ["12.0", 0, "Pitch"],
  ["0.00", 0, "Rand Pitch"],
  ["25 %", 25, "Feedback"],
  ["2.3 %", 3, "DryWet"],
];

const GrainDevice = () => (
  <Device title="Stereo Grain Delay" className="w-[353px] shrink-0">
    <div className="flex gap-1 px-1 pt-1">
      <div className="flex w-[95px] shrink-0 flex-col gap-[3px]">
        {grainRows.map(([value, fill, label]) => (
          <div key={label} className="relative flex justify-between">
            <Field label={`${label} amount`} value={value} fill={fill} className="w-[39px]" />
            {label === "Pitch" && (
              <svg className="pointer-events-none absolute left-8 top-0.5" width="6" height="8">
                <path d="M6 0v8L0 4z" fill="#66e2e4" />
              </svg>
            )}
            <button
              className={`${chip} h-3 w-[52px] ${
                label === "Frequency" ? "bg-[#fab50f] text-[#5a3c00]" : "bg-[#a8a8a8]"
              }`}
            >
              {label}
            </button>
          </div>
        ))}
        <div className="mt-0.5 grid grid-cols-4 gap-[3px] text-[#444]">
          {["1", "2", "3", "4", "5", "6", "8", "16"].map((n) => (
            <button key={n} className={`${chip} h-3 ${n === "2" ? "bg-[#dadada]" : "bg-[#a0a0a0]"}`}>
              {n}
            </button>
          ))}
        </div>
        <div className="flex justify-between">
          <button className={`${chip} h-3 w-[30px] bg-[#66e2e4]`}>Time</button>
          <Field label="Delay time" value="1.00 ms" className="w-[46px]" />
        </div>
      </div>
      <svg className="h-[135px] min-w-0 flex-1" viewBox="0 0 247 135" preserveAspectRatio="none">
        <rect width="247" height="135" rx="3" fill="#181818" />
        {Array.from({ length: 9 }, (_, i) => (
          <path
            key={i}
            d={`M${Math.round((i + 1) * 24.7)}.5 0v135M0 ${Math.round((i + 1) * 13.5)}.5h247`}
            stroke="#4a4a4a"
          />
        ))}
        <circle cx="241" cy="102.500" r="5.300" fill="none" stroke="#e0ab2b" strokeWidth="1.500" />
      </svg>
    </div>
    <div className="grid grid-cols-6 gap-[3px] px-1 pt-[3px]">
      {["Delay Time", "Spray", "Frequency", "Pitch", "Rand Pitch", "Feedback"].map((t) => (
        <button
          key={t}
          className={`${chip} h-[13px] ${t === "Pitch" ? "bg-[#fab50f] text-[#5a3c00]" : "bg-[#a8a8a8]"}`}
        >
          {t}
        </button>
      ))}
    </div>
  </Device>
);

const AutoPanDevice = () => (
  <Device title="Auto Pan" className="w-[190px] shrink-0">
    <div className="mx-1 mt-[3px] flex h-[47px] flex-col rounded bg-[#181818]">
      <svg className="mx-0.5 mt-[18px]" width="178" height="10" fill="none" strokeWidth="1.500">
        <path d={wave(178, 5, 2, 82, 60)} stroke="#d8a82a" />
        <path d={wave(178, 5, 2, 82, 19)} stroke="#6bd6d0" />
      </svg>
      <div className="flex justify-between px-[3px] pt-1.5 font-bold leading-3">
        <span className="text-[#7ecdf2]">L</span>
        <span className="text-[#e89b2c]">R</span>
      </div>
    </div>
    <div className="grid grid-cols-4 pr-1 pt-[13px]">
      <Knob label="Amount" value="7.94 %" angle={-128} />
      <Knob label="Rate" value="0.61 Hz" angle={-48} />
      <Knob label="Phase" value="180°" angle={0} />
      <Knob label="Shape" value="0.00 %" angle={-150} />
    </div>
    <div className="mt-auto flex items-end pb-[11px] pl-1">
      <button className={`${chip} h-[13px] w-[39px] bg-[#b4b4b4]`}>Normal</button>
      <div className="ml-4 flex flex-col gap-0.5">
        <button className={`${chip} h-[13px] w-5 bg-[#fab50f] text-[#5a3c00]`}>Hz</button>
        <button className={`${chip} h-[13px] w-5 bg-[#b4b4b4]`}>♪</button>
      </div>
      <div className="ml-[27px] flex flex-col gap-0.5">
        <button aria-label="Phase mode" className={`${chip} h-[13px] w-5 bg-[#fab50f]`}>
          <svg width="10" height="10" fill="none" stroke="#2b2105" strokeWidth="1.200">
            <circle cx="5" cy="5" r="3.200" />
            <path d="M6.500 0l-3 10" />
          </svg>
        </button>
        <button aria-label="Spin mode" className={`${chip} h-[13px] w-5 bg-[#b4b4b4]`}>
          <svg width="10" height="10" fill="none" stroke="#111" strokeWidth="1.300">
            <circle cx="5" cy="5" r="3.800" />
            <path d="M4 3a2 2 0 1 1 0 4M5 3.500v3" />
          </svg>
        </button>
      </div>
      <div className="ml-[15px] grid grid-cols-2 gap-x-[3px] gap-y-0.5">
        <button aria-label="Sine" className={`${chip} h-[13px] w-5 bg-[#fab50f]`}>
          <svg width="15" height="9">
            <path d="M0 7h1C3 0 5 0 7.500 4.500S12 9 14 2h1" fill="none" stroke="#2b2105" strokeWidth="1.300" />
          </svg>
        </button>
        <button aria-label="Saw" className={`${chip} h-[13px] w-5 bg-[#b4b4b4]`}>
          <svg width="15" height="9">
            <path d="M1 8V1l13 6" fill="none" stroke="#111" />
          </svg>
        </button>
        <button aria-label="Triangle" className={`${chip} h-[13px] w-5 bg-[#b4b4b4]`}>
          <svg width="15" height="9">
            <path d="M0 8l7.500-6L15 8" fill="none" stroke="#111" strokeWidth="1.200" />
          </svg>
        </button>
        <button aria-label="Random" className={`${chip} h-[13px] w-5 bg-[#b4b4b4]`}>
          <svg width="16" height="9">
            <path d="M0 4h3V2h4v2h4V2h5v4h-5v1H8v1H3V7H0z" />
          </svg>
        </button>
      </div>
    </div>
  </Device>
);

const eqMinor = [31, 49, 63, 73, 81, 88, 94, 100, 135, 154, 166, 177, 185, 192, 198, 204, 239, 257, 270, 280];

const bell = "M0 6h4M14 6h4M4 6l3-4h4l3 4-3 4H7z";
const bandShapes = [
  "M1 10V6Q1 2 5 2h9M8 6l3 4m0-4l-3 4M14 6v2h4M16.500 5v5",
  bell,
  bell,
  "M0 6h7M16 2h-4L7 6l5 4h4",
  bell,
  bell,
  bell,
];

const EqDevice = () => (
  <Device title="EQ Eight" plain className="min-w-0 flex-1">
    <div className="flex flex-1 gap-[3px] pl-0.5">
      <div className="flex w-11 shrink-0 flex-col rounded bg-[#999] pt-0.5">
        <Knob label="Freq" value="206 Hz" angle={-33} />
        <div className="pb-1 pt-[5px]">
          <Knob label="Gain" value="-7.31 dB" angle={-72} bipolar />
        </div>
        <Knob label="Q" value="0.71" angle={-38} />
      </div>
      <div className="flex min-w-0 flex-1 flex-col">
        <div className="relative h-[125px] bg-[#181818]">
          <svg className="absolute inset-0 h-full w-full">
            {eqMinor.map((x) => (
              <path key={x} d={`M${x}.5 0v124`} stroke="#333" />
            ))}
            <path d="M105.500 0v110M208.500 0v110" stroke="#5a5a5a" />
            <path d="M20 12.500h280M20 37.500h280M20 87.500h280M20 112.500h280" stroke="#383838" />
            <path d="M20 62.500h280" stroke="#6a6a6a" />
            <path
              d="M130 125C142 119 148 109 155 97C168 75 178 68 195 66C210 62.500 240 61.500 300 61.500"
              fill="none"
              stroke="#5fd3cf"
              strokeWidth="1.600"
            />
            <circle cx="138" cy="90" r="6" fill="#f5b324" />
            <circle cx="102" cy="107.500" r="5.300" fill="#181818" stroke="#e0ab2b" strokeWidth="1.500" />
            <text x="138" y="93" textAnchor="middle" fontSize="8" fill="#5a3c00">3</text>
            <text x="102" y="110.500" textAnchor="middle" fontSize="8" fill="#e0ab2b">1</text>
            <text x="104" y="123" textAnchor="middle" fontSize="10" fill="#8d8d8d">100</text>
            <text x="207" y="123" textAnchor="middle" fontSize="10" fill="#8d8d8d">1k</text>
          </svg>
          <div className="absolute left-0 top-0 flex w-[18px] flex-col text-right leading-[25px] text-[#9a9a9a]">
            {["12", "6", "0", "-6", "-12"].map((t) => (
              <span key={t}>{t}</span>
            ))}
          </div>
        </div>
        <div className="flex flex-1 overflow-hidden pt-0.5">
          {bandShapes.map((d, i) => {
            const lit = i === 0 || i === 2;
            return (
              <div
                key={i}
                className={`mr-0.5 flex w-[42px] shrink-0 flex-col items-center gap-[3px] rounded pt-[3px] ${
                  i === 2 ? "bg-[#b0b0b0]" : "bg-[#999]"
                }`}
              >
                <button
                  aria-label={`Band ${i + 1} filter type`}
                  className={`flex h-3 w-[34px] items-center justify-between border border-[#4d4d4d] px-0.5 ${
                    lit ? "bg-[#e4e4e4]" : "bg-[#8f8f8f]"
                  }`}
                >
                  <svg width="20" height="12" viewBox="0 0 20 12" fill="none" stroke="#1a1a1a">
                    <path d={d} />
                  </svg>
                  <Arrow className="h-[5px] w-[6px]" />
                </button>
                <label className="flex items-center gap-[6px] leading-3">
                  <input
                    type="checkbox"
                    defaultChecked={lit}
                    className="size-[11px] appearance-none border border-[#4d4d4d] bg-[#a8a8a8] checked:bg-[#66e2e4]"
                    aria-label={`Band ${i + 1} on`}
                  />
                  {i < 6 ? <span>{i + 1}</span> : <span className="w-1.5" />}
                </label>
              </div>
            );
          })}
        </div>
      </div>
    </div>
  </Device>
);

const DeviceChain = () => (
  <div className="mt-[7px] ml-2 mr-[6px] flex h-[184px] rounded bg-[#515151] pb-1 pr-[3px] pt-[5px]">
    <RackDots className="w-[13px]" />
    <PitchDevice />
    <RackDots className="w-[10px]" />
    <WavetableDevice />
    <LevelPair className="w-[10px]" />
    <ChorusDevice />
    <LevelPair className="w-[11px]" />
    <GrainDevice />
    <LevelPair className="w-[11px]" />
    <AutoPanDevice />
    <LevelPair className="w-[10px]" />
    <EqDevice />
  </div>
);

const StatusBar = () => (
  <footer className="flex h-[34px] gap-2 pl-[7px]">
    <div className="pt-2">
      <RoundButton label="Show info view">
        <path d="M5 4v10l9-5z" fill="#a3a3a3" />
      </RoundButton>
    </div>
    <div className="mt-[7px] h-[21px] flex-1 rounded-sm border-2 border-[#565656] bg-[#8f8f8f]" />
    <div className="mt-[7px] h-[21px] w-[191px] rounded-sm border-2 border-[#565656] bg-[#8f8f8f]" />
    <div className="flex h-[28px] w-[196px] items-center gap-1 rounded-b bg-[#515151] pl-[5px] pt-2 font-semibold">
      <span className="whitespace-nowrap">4 Classic Keys</span>
      <svg width="121" height="19" className="shrink-0">
        <path d="M1 2h119v15H1z" fill="#8f8f8f" />
        <path d="M10 3h15v10H10zM41 4h21v11H41zM65 4h15v4H65zM87 4h14v10H87zM103 4h12v10h-12z" fill="#1c1c1c" />
        <path d="M12 6h11M12 10h11M66 6h13" stroke="#8a7a3a" />
        <path d="M7.500 2v15M30.500 2v15M39.500 2v15M64 2v15M82 2v15" stroke="#6a6a6a" />
        <path d="M1 1h102v17H1z" fill="none" stroke="#000" strokeWidth="2" />
      </svg>
    </div>
    <div className="pr-[5px] pt-2">
      <RoundButton label="Show device view">
        <path d="M9 4l5 9H4z" fill="#a3a3a3" />
      </RoundButton>
    </div>
  </footer>
);

const App: React.FC = () => (
  <div className="relative flex min-h-screen min-w-[1200px] flex-col overflow-hidden border-b-2 border-r-[3px] border-b-[#65657a] border-r-[#667474] bg-[#6f6f6f] font-['Roboto',sans-serif] text-[10px] font-medium text-[#161616]">
    <ControlBar />
    <Arrangement />
    <DeviceChain />
    <StatusBar />
    <svg className="absolute -right-[3px] bottom-0" width="7" height="8">
      <path d="M0 0h7v3H3v5H0z" fill="#fab50f" />
    </svg>
  </div>
);

export default App;
